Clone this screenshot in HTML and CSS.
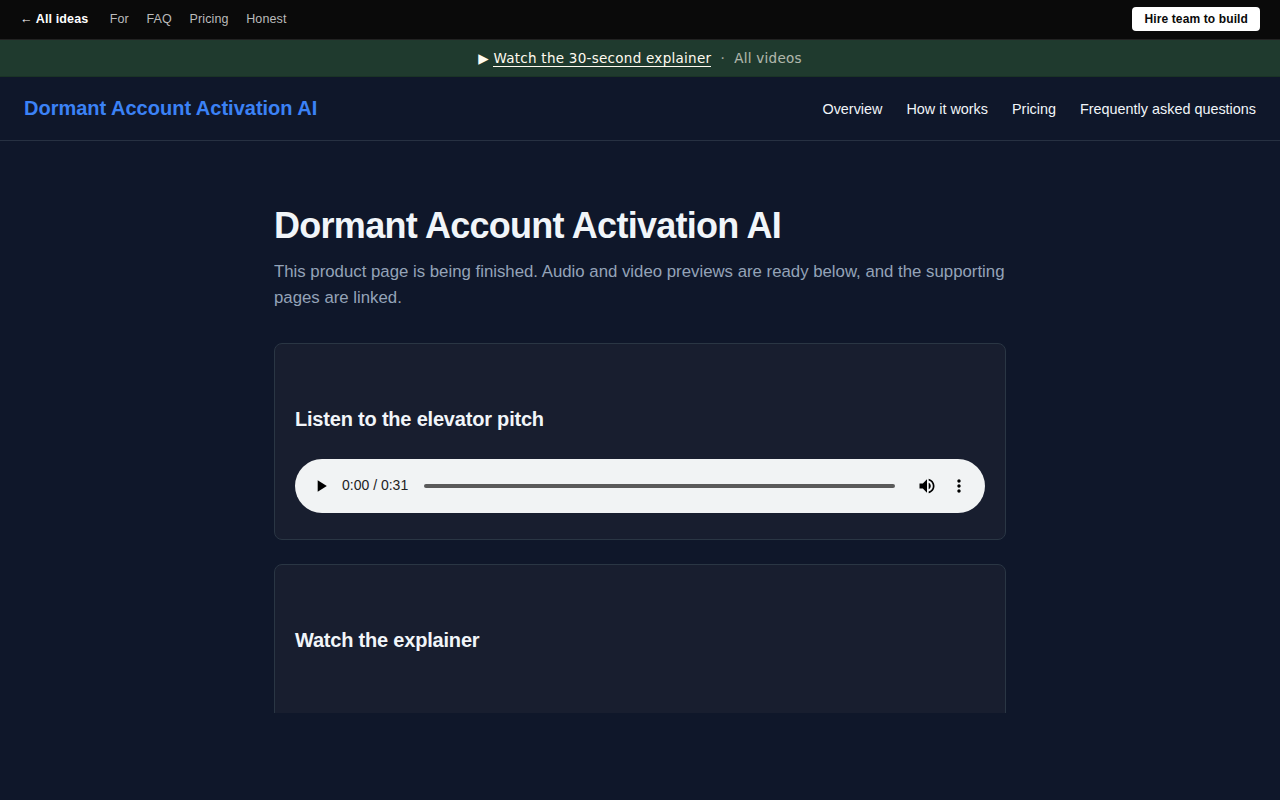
FILE: index.html
```html
<!DOCTYPE html>
<html lang="en">

<head>
    <meta charset="UTF-8">
    <meta name="viewport" content="width=device-width, initial-scale=1.0">
    <title>Dormant Account Activation AI</title>
    <link rel="stylesheet" href="styles.css">
</head>

<body>
    <div class="topbar">
        <a class="back" href="#">← All ideas</a>
        <a href="#">For</a>
        <a href="#">FAQ</a>
        <a href="#">Pricing</a>
        <a href="#">Honest</a>
        <a class="hire" href="#">Hire team to build</a>
    </div>

    <div class="banner">
        <span class="play">▶</span>
        <a class="watch" href="#">Watch the 30-second explainer</a>
        <span class="dot">·</span>
        <a class="all" href="#">All videos</a>
    </div>

    <header class="header">
        <a class="brand" href="#">Dormant Account Activation AI</a>
        <nav>
            <a href="#">Overview</a>
            <a href="#">How it works</a>
            <a href="#">Pricing</a>
            <a href="#">Frequently asked questions</a>
        </nav>
    </header>

    <main>
        <h1>Dormant Account Activation AI</h1>
        <p class="lead">This product page is being finished. Audio and video previews are ready below, and the supporting pages are linked.</p>

        <section class="card">
            <h2>Listen to the elevator pitch</h2>
            <div class="player">
                <svg class="icon-play" width="20" height="20" viewBox="0 0 24 24"><path d="M8 5v14l11-7z"/></svg>
                <span class="time">0:00 / 0:31</span>
                <div class="track"></div>
                <svg class="icon-volume" width="20" height="20" viewBox="0 0 24 24"><path d="M3 9v6h4l5 5V4L7 9H3zm13.500 3c0-1.770-1.020-3.290-2.500-4.030v8.050c1.480-.730 2.500-2.250 2.500-4.020zM14 3.230v2.060c2.890.860 5 3.540 5 6.710s-2.110 5.850-5 6.710v2.060c4.010-.910 7-4.490 7-8.770s-2.990-7.860-7-8.770z"/></svg>
                <svg width="20" height="20" viewBox="0 0 24 24"><path d="M12 8c1.100 0 2-.900 2-2s-.900-2-2-2-2 .900-2 2 .900 2 2 2zm0 2c-1.100 0-2 .900-2 2s.900 2 2 2 2-.900 2-2-.900-2-2-2zm0 6c-1.100 0-2 .900-2 2s.900 2 2 2 2-.900 2-2-.900-2-2-2z"/></svg>
            </div>
        </section>

        <section class="card">
            <h2>Watch the explainer</h2>
        </section>
    </main>
</body>

</html>
```

FILE: styles.css
```css
* {
    margin: 0;
    padding: 0;
    box-sizing: border-box;
}

body {
    height: 800px;
    overflow: hidden;
    background: #0f172a;
    color: #f1f5f9;
    font-family: "Liberation Sans", Arial, sans-serif;
    font-size: 16px;
}

a {
    color: inherit;
    text-decoration: none;
}

.topbar {
    display: flex;
    align-items: center;
    gap: 17.6px;
    height: 40px;
    padding: 0 20px 2px;
    background: #0a0a0a;
    border-bottom: 1px solid #222;
    color: #bbb;
    font-size: 12.5px;
    letter-spacing: 0.125px;
}

.topbar .back {
    margin-right: 3.9px;
    color: #fff;
    font-weight: bold;
}

.topbar .hire {
    margin-left: auto;
    padding: 0 12px;
    background: #fff;
    border-radius: 4px;
    color: #0a0a0a;
    font-size: 12px;
    font-weight: bold;
    line-height: 24px;
}

.banner {
    display: flex;
    justify-content: center;
    align-items: center;
    height: 37px;
    background: #1f3a2e;
    border-bottom: 1px solid #1a3326;
    color: #fffbf0;
    font-family: "DejaVu Sans", sans-serif;
    font-size: 13.5px;
    letter-spacing: 0.27px;
}

.banner .play {
    margin-right: 4.6px;
}

.banner .watch {
    padding-top: 2px;
    line-height: 15px;
    border-bottom: 1px solid #fffbf0;
}

.banner .dot {
    margin: 0 9.2px;
    opacity: 0.6;
}

.banner .all {
    opacity: 0.65;
}

.header {
    display: flex;
    justify-content: space-between;
    align-items: center;
    height: 64px;
    padding: 0 24px;
    border-bottom: 1px solid #273142;
}

.header .brand {
    color: #3b82f6;
    font-size: 20px;
    font-weight: bold;
}

.header nav {
    display: flex;
    gap: 24px;
    font-size: 14.4px;
}

main {
    width: 732px;
    height: 572px;
    margin: 0 auto;
    padding-top: 64px;
    overflow: hidden;
}

h1 {
    font-size: 36px;
    line-height: 42px;
    letter-spacing: -0.72px;
}

.lead {
    margin-top: 12px;
    margin-bottom: 32px;
    color: #94a3b8;
    font-size: 16.8px;
    line-height: 26px;
}

.card {
    height: 197px;
    margin-bottom: 24px;
    padding: 64px 20px 0;
    background: #181e2f;
    border: 1px solid #2a3644;
    border-radius: 8px;
}

.card h2 {
    margin-bottom: 28px;
    font-size: 20px;
    line-height: 23px;
    letter-spacing: -0.2px;
}

.player {
    display: flex;
    align-items: center;
    height: 54px;
    padding: 0 16px;
    background: #f1f3f4;
    border-radius: 27px;
    color: #222;
}

.player svg {
    fill: #000;
}

.player .time {
    margin: 0 16px 2px 11px;
    font-size: 14px;
}

.player .track {
    flex: 1;
    height: 4px;
    border-radius: 2px;
    background: #5a5a5a;
}

.player .icon-volume {
    margin: 0 12px 0 22.4px;
}
```
